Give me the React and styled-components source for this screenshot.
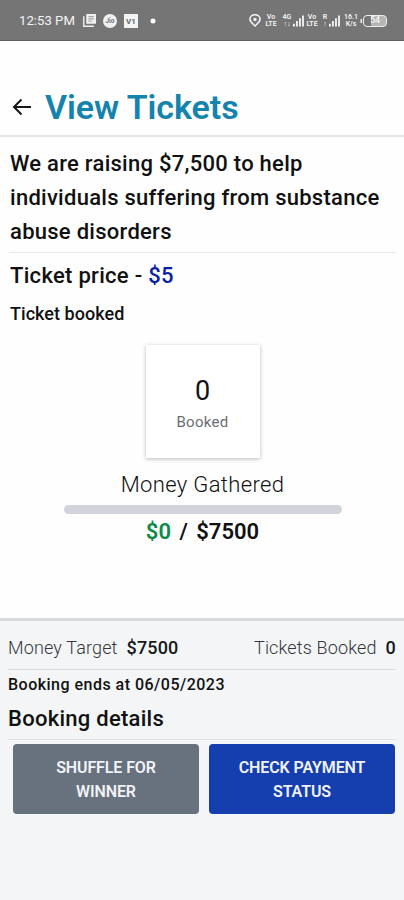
import React from 'react';
import styled, { createGlobalStyle } from 'styled-components';

const GlobalStyle = createGlobalStyle`
  * {
    box-sizing: border-box;
  }

  body {
    margin: 0;
    background-color: #fefefe;
    font-family: Roboto, "Liberation Sans", sans-serif;
    color: #111;
  }
`;

const Screen = styled.div`
  display: flex;
  flex-direction: column;
  height: 900px;
  width: 404px;
  overflow: hidden;
`;

const StatusBar = styled.div`
  display: flex;
  justify-content: space-between;
  height: 41px;
  padding: 1px 17px 0 19px;
  background-color: #757575;
  border-bottom: 1px solid #5f5f5f;
  color: #f4f4f4;
`;

const StatusGroup = styled.div`
  display: flex;
  align-items: center;
  gap: ${props => props.gap}px;
`;

const Clock = styled.span`
  width: 57px;
  font-size: 13.2px;
  white-space: nowrap;
`;

const Tiny = styled.span`
  width: ${props => props.width || 12}px;
  margin-left: ${props => props.offset || 0}px;
  font-size: 7px;
  line-height: 6.5px;
  font-weight: 600;
  text-align: center;
  white-space: pre-line;
`;

const Battery = styled.span`
  display: flex;
  align-items: center;
  justify-content: center;
  width: 24px;
  height: 12px;
  border: 1.5px solid #eee;
  border-radius: 4px;
  background: linear-gradient(to right, transparent 30%, #b5b5b5 30%);
  font-size: 9px;
  line-height: 9px;
  color: #fff;
`;

const Header = styled.header`
  display: flex;
  align-items: flex-end;
  height: 96px;
  padding: 0 12px 7px;
  border-bottom: 2px solid #e6e6e6;
`;

const BackIcon = styled.svg`
  width: 20px;
  height: 18px;
  margin-bottom: 12px;
`;

const Title = styled.h1`
  margin: 0 0 0 13px;
  font-size: 34px;
  line-height: 42px;
  font-weight: 600;
  letter-spacing: -0.05px;
  color: #1483ae;
`;

const Campaign = styled.main`
  flex: 1;
  padding: 10px 8px 0 9px;
`;

const Line = styled.div`
  height: ${props => props.height}px;
  padding-left: ${props => props.indent || 0}px;
  font-size: ${props => props.size}px;
  line-height: ${props => props.height}px;
  font-weight: ${props => props.weight || 500};
  letter-spacing: ${props => props.spacing || 0}px;
  text-align: ${props => props.align || 'left'};
  white-space: nowrap;
`;

const Description = styled.p`
  margin: 0 0 3px 1px;
  font-size: 22px;
  line-height: 34px;
  font-weight: 500;
  letter-spacing: 0.27px;
`;

const Divider = styled.div`
  height: 1px;
  background-color: ${props => props.color || '#e9e9e9'};
`;

const Price = styled.span`
  color: #0a1fa8;
`;

const BookedCard = styled.div`
  display: flex;
  flex-direction: column;
  align-items: center;
  width: 114px;
  height: 113px;
  margin: 15px auto 11px;
  padding-top: 29px;
  background-color: #fff;
  box-shadow: 0 1px 4px rgba(0, 0, 0, 0.28);
`;

const BookedCount = styled.div`
  font-size: 27px;
  line-height: 34px;
`;

const BookedLabel = styled.div`
  font-size: 15px;
  line-height: 28px;
  letter-spacing: 0.3px;
  color: #6b6e73;
`;

const ProgressTrack = styled.div`
  width: 278px;
  height: 9px;
  margin: 5px auto 2px 55px;
  border-radius: 5px;
  background-color: #d1d5db;
`;

const Gathered = styled(Line)`
  word-spacing: 3px;
`;

const Raised = styled.span`
  color: #0d8a48;
`;

const Details = styled.footer`
  height: 282px;
  padding: 0 8px;
  border-top: 3px solid #d9dadc;
  background-color: #f3f5f7;
`;

const Totals = styled.div`
  display: flex;
  justify-content: space-between;
  height: 48px;
  padding-top: 13px;
`;

const Total = styled.div`
  font-size: 18px;
  line-height: 28px;
  font-weight: 300;
  letter-spacing: 0.15px;
  color: #33363b;
  white-space: nowrap;
`;

const Amount = styled.b`
  margin-left: 9px;
  font-weight: 500;
  color: #16181b;
`;

const Actions = styled.div`
  display: flex;
  gap: 10px;
  padding: 4px 1px 0 5px;
`;

const Button = styled.button`
  flex: 1;
  height: 70px;
  padding: 2px 25px 0;
  border: 0;
  border-radius: 4px;
  background-color: ${props => props.$primary ? '#153eaf' : '#68717e'};
  font-family: inherit;
  font-size: 16px;
  line-height: 24px;
  font-weight: 600;
  letter-spacing: -0.1px;
  color: #f1f3f7;
`;

const Signal = () => (
  <svg width="11" height="12" viewBox="0 0 12 12" fill="#f4f4f4">
    <path d="M0 9h2v3H0zM3.3 6h2v6h-2zM6.6 3h2v9h-2zM9.9 0h2v12h-2z" />
  </svg>
);

const App = () => (
  <Screen>
    <GlobalStyle />
    <StatusBar>
      <StatusGroup gap={7}>
        <Clock>12:53 PM</Clock>
        <svg width="13" height="13" viewBox="0 0 12 12">
          <path d="M3 0h9v9H3z" fill="#f0f0f0" />
          <path d="M.7 2v9.3H10" fill="none" stroke="#f0f0f0" strokeWidth="1.3" />
          <path d="M5 2.5h5M5 4.5h5M5 6.5h3" stroke="#858585" strokeWidth=".8" />
        </svg>
        <svg width="14" height="14" viewBox="0 0 14 14">
          <circle cx="7" cy="7" r="7" fill="#f0f0f0" />
          <text x="7" y="9.3" fontSize="6.5" fontWeight="700" textAnchor="middle" fill="#757575">Jio</text>
        </svg>
        <svg width="14" height="14" viewBox="0 0 14 14">
          <path d="M0 0h14v14H0z" fill="#f4f4f4" />
          <text x="7" y="9.5" fontSize="8" fontWeight="700" textAnchor="middle" fill="#666">V1</text>
        </svg>
        <svg width="18" height="6" viewBox="0 0 18 6">
          <circle cx="8" cy="3" r="2.5" fill="#fff" />
        </svg>
      </StatusGroup>
      <StatusGroup gap={1}>
        <svg width="12" height="13" viewBox="0 0 13 14" fill="none" stroke="#f4f4f4" strokeWidth="1.7">
          <path d="M6.5 13C4 10.2 1 8.5 1 5.7a5.5 5 0 0 1 11 0C12 8.5 9 10.2 6.5 13z" />
          <circle cx="6.5" cy="5.8" r="1" />
        </svg>
        <Tiny offset={3}>{'Vo\nLTE'}</Tiny>
        <Tiny width={10} offset={4}>{'4G\n↑↓'}</Tiny>
        <Signal />
        <Tiny offset={1}>{'Vo\nLTE'}</Tiny>
        <Tiny width={6} offset={3}>{'R\n↑'}</Tiny>
        <Signal />
        <Tiny width={14} offset={3}>{'16.1\nK/s'}</Tiny>
        <svg width="3" height="6" viewBox="0 0 3 6">
          <path d="M1.5 1H3v4H1.500z" fill="#eee" />
        </svg>
        <Battery>54</Battery>
      </StatusGroup>
    </StatusBar>

    <Header>
      <BackIcon viewBox="0 0 20 18" fill="none" stroke="#171717" strokeWidth="2">
        <path d="M19 9H2.5M9.500 1.500L2 9l7.500 7.500" />
      </BackIcon>
      <Title>View Tickets</Title>
    </Header>

    <Campaign>
      <Description>
        We are raising $7,500 to help individuals suffering from substance abuse disorders
      </Description>
      <Divider />
      <Line size={22} height={45} indent={1} spacing={0.3}>
        Ticket price - <Price>$5</Price>
      </Line>
      <Line size={18} height={32} indent={1} spacing={0.05}>Ticket booked</Line>
      <BookedCard>
        <BookedCount>0</BookedCount>
        <BookedLabel>Booked</BookedLabel>
      </BookedCard>
      <Line size={22} height={31} weight={300} spacing={0.35} align="center">Money Gathered</Line>
      <ProgressTrack />
      <Gathered size={22} height={31} weight={600} align="center">
        <Raised>$0</Raised> / $7500
      </Gathered>
    </Campaign>

    <Details>
      <Totals>
        <Total>Money Target<Amount>$7500</Amount></Total>
        <Total>Tickets Booked<Amount>0</Amount></Total>
      </Totals>
      <Divider color="#d9dbde" />
      <Line size={16} height={29} spacing={0.48}>Booking ends at 06/05/2023</Line>
      <Line size={22} height={40} spacing={0.27}>Booking details</Line>
      <Divider color="#e2e2e4" />
      <Actions>
        <Button>SHUFFLE FOR WINNER</Button>
        <Button $primary>CHECK PAYMENT STATUS</Button>
      </Actions>
    </Details>
  </Screen>
);

export default App;
